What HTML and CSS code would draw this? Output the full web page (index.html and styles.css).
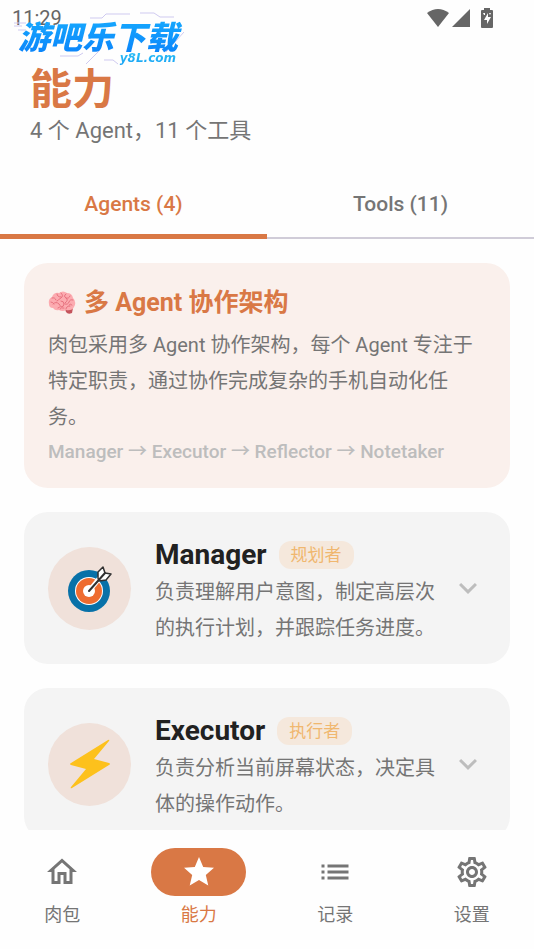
FILE: index.html
```
<!DOCTYPE html>
<html lang="zh-CN">
<head>
  <meta charset="UTF-8">
  <meta name="viewport" content="width=device-width, initial-scale=1">
  <title>能力</title>
  <link rel="stylesheet" href="styles.css">
</head>
<body>

  <div class="status-bar">
    <span>11:29</span>
    <div class="status-icons">
      <svg width="22" height="18" viewBox="0 0 22 18"><path d="M0 4Q11-4 22 4L11 18z"/></svg>
      <svg width="18" height="18" viewBox="0 0 18 18"><path d="M18 0V18H0z"/></svg>
      <svg class="battery" width="12" height="20" viewBox="0 0 12 20">
        <path d="M3 2V0h6v2h2q1 0 1 1v16q0 1-1 1H1q-1 0-1-1V3q0-1 1-1z"/>
        <path d="M7 5l-4 7h3v4l4-7H7zM2 5h2v2H3zM8 5h2L9 7z" fill="#fff"/>
      </svg>
    </div>
  </div>

  <div class="watermark">
    <svg class="watermark-lines" width="170" height="54" viewBox="0 0 170 54" stroke="#cfcaf0">
      <path d="M0 11h12M0 14h8M76 6h12l4-4h24M126 1h14l6 4h14M4 18h8M46 44h18l5-3M72 52l14-14M90 48h9l5 4M152 40l18-20"/>
    </svg>
    <span class="watermark-name">游吧乐下载</span>
    <span class="watermark-site">y8L.com</span>
  </div>

  <header>
    <h1>能力</h1>
    <p>4 个 Agent，11 个工具</p>
  </header>

  <div class="tabs" role="tablist">
    <button class="tab active" role="tab" aria-selected="true">Agents (4)</button>
    <button class="tab" role="tab" aria-selected="false">Tools (11)</button>
  </div>

  <main>
    <section class="intro">
      <h2>
        <svg width="28" height="24" viewBox="0 0 28 24">
          <path d="M17 18q5 0 8-1l-1 5q-4 2-6-1z" fill="#c4545c"/>
          <path d="M1 13Q0 8 4 6 6 1 11 2q4-3 8 0 5 0 6 5 4 4 1 9-2 4-8 3-3 2-7 0-4 1-6-2-4 0-4-4z" fill="#fcabb0"/>
          <path d="M4 7q3-1 4 2M9 3q0 3 4 3M5 13q3-3 6 0t-1 4M13 2q3 3 0 5t-4 3M18 3q-3 2 0 4t-1 5M22 5q-1 3-4 2M13 10q3 0 3 3t-3 3M25 9q-3-1-4 2t-4 2M18 18q0-3 4-3M24 14q-2-2-3 0M3 11q2 0 3 2M12 18q1-2 4-1" fill="none" stroke="#e7727f" stroke-linecap="round"/>
        </svg>
        多 Agent 协作架构
      </h2>
      <p>肉包采用多 Agent 协作架构，每个 Agent 专注于特定职责，通过协作完成复杂的手机自动化任务。</p>
      <p class="flow">Manager → Executor → Reflector → Notetaker</p>
    </section>

    <article class="agent">
      <div class="avatar">
        <svg width="44" height="48" viewBox="0 0 44 48">
          <circle cx="21" cy="27" r="21" fill="#0871a8"/>
          <circle cx="21" cy="27" r="14" fill="#fff"/>
          <circle cx="21" cy="27" r="13" fill="#ee6c30"/>
          <circle cx="21" cy="27" r="6" fill="#fff"/>
          <path d="M21 27L35 10" stroke="#fff" stroke-width="5"/>
          <path d="M30 14V8l5-5 2 6 6 1-5 6-7 1z" fill="#fff" stroke="#303030" stroke-width="1.5" stroke-linejoin="round"/>
          <path d="M21 27L37 9" stroke="#303030" stroke-width="2" stroke-linecap="round"/>
        </svg>
      </div>
      <div class="agent-text">
        <div class="agent-title">
          <h3>Manager</h3>
          <span class="badge">规划者</span>
        </div>
        <p>负责理解用户意图，制定高层次的执行计划，并跟踪任务进度。</p>
      </div>
      <button class="expand" aria-label="展开 Manager">
        <svg width="36" height="36" viewBox="0 0 24 24"><path d="M7.41 8.59L12 13.17l4.59-4.58L18 10l-6 6-6-6z"/></svg>
      </button>
    </article>

    <article class="agent">
      <div class="avatar">
        <svg width="42" height="50" viewBox="0 0 42 50">
          <path d="M39 1q2-1 1 1L25 20l15 4q2 1 0 2L3 49q-2 1-1-1l15-18-15-4q-2-1 0-2z" fill="#fdc11c"/>
        </svg>
      </div>
      <div class="agent-text">
        <div class="agent-title">
          <h3>Executor</h3>
          <span class="badge">执行者</span>
        </div>
        <p>负责分析当前屏幕状态，决定具体的操作动作。</p>
      </div>
      <button class="expand" aria-label="展开 Executor">
        <svg width="36" height="36" viewBox="0 0 24 24"><path d="M7.41 8.59L12 13.17l4.59-4.58L18 10l-6 6-6-6z"/></svg>
      </button>
    </article>
  </main>

  <nav>
    <a href="#home">
      <span class="nav-icon"><svg width="36" height="36" viewBox="0 0 24 24"><path d="M12 5.69l5 4.5V18h-2v-6H9v6H7v-7.81l5-4.5M12 3L2 12h3v8h6v-6h2v6h6v-8h3L12 3z"/></svg></span>
      肉包
    </a>
    <a href="#skills" class="active">
      <span class="nav-icon"><svg width="36" height="36" viewBox="0 0 24 24"><path d="M12 17.27L18.18 21l-1.64-7.03L22 9.24l-7.19-.61L12 2 9.19 8.63 2 9.24l5.46 4.73L5.82 21z"/></svg></span>
      能力
    </a>
    <a href="#history">
      <span class="nav-icon"><svg width="36" height="36" viewBox="0 0 24 24"><path d="M3 13h2v-2H3v2zm0 4h2v-2H3v2zm0-8h2V7H3v2zm4 4h14v-2H7v2zm0 4h14v-2H7v2zM7 7v2h14V7H7z"/></svg></span>
      记录
    </a>
    <a href="#settings">
      <span class="nav-icon"><svg width="36" height="36" viewBox="0 0 24 24"><path d="M19.43 12.98c.04-.32.07-.64.07-.98 0-.34-.03-.66-.07-.98l2.11-1.65c.19-.15.24-.42.12-.64l-2-3.46c-.09-.16-.26-.25-.44-.25-.06 0-.12.01-.17.03l-2.49 1c-.52-.4-1.08-.73-1.69-.98l-.38-2.65C14.46 2.18 14.25 2 14 2h-4c-.25 0-.46.18-.49.42l-.38 2.65c-.61.25-1.17.59-1.69.98l-2.49-1c-.06-.02-.12-.03-.18-.03-.17 0-.34.09-.43.25l-2 3.46c-.13.22-.07.49.12.64l2.11 1.65c-.04.32-.07.65-.07.98 0 .33.03.66.07.98l-2.11 1.65c-.19.15-.24.42-.12.64l2 3.46c.09.16.26.25.44.25.06 0 .12-.01.17-.03l2.49-1c.52.4 1.08.73 1.69.98l.38 2.65c.03.24.24.42.49.42h4c.25 0 .46-.18.49-.42l.38-2.65c.61-.25 1.17-.59 1.69-.98l2.49 1c.06.02.12.03.18.03.17 0 .34-.09.43-.25l2-3.46c.12-.22.07-.49-.12-.64l-2.11-1.65zm-1.98-1.71c.04.31.05.52.05.73 0 .21-.02.43-.05.73l-.14 1.13.89.7 1.08.84-.7 1.21-1.27-.51-1.04-.42-.9.68c-.43.32-.84.56-1.25.73l-1.06.43-.16 1.13-.2 1.35h-1.4l-.19-1.35-.16-1.13-1.06-.43c-.43-.18-.83-.41-1.23-.71l-.91-.7-1.06.43-1.27.51-.7-1.21 1.08-.84.89-.7-.14-1.13c-.03-.31-.05-.54-.05-.74s.02-.43.05-.73l.14-1.13-.89-.7-1.08-.84.7-1.21 1.27.51 1.04.42.9-.68c.43-.32.84-.56 1.25-.73l1.06-.43.16-1.13.2-1.35h1.39l.19 1.35.16 1.13 1.06.43c.43.18.83.41 1.23.71l.91.7 1.06-.43 1.27-.51.7 1.21-1.07.85-.89.7.14 1.13zM12 8c-2.21 0-4 1.79-4 4s1.79 4 4 4 4-1.79 4-4-1.79-4-4-4zm0 6c-1.1 0-2-.9-2-2s.9-2 2-2 2 .9 2 2-.9 2-2 2z"/></svg></span>
      设置
    </a>
  </nav>

</body>
</html>
```
FILE: styles.css
```
* {
  box-sizing: border-box;
}

body {
  margin: 0;
  height: 100vh;
  display: flex;
  flex-direction: column;
  font-family: Roboto, "Noto Sans CJK SC", sans-serif;
  font-size: 20px;
  color: #757575;
  background: #fefefe;
}

h1, h2, h3, p {
  margin: 0;
}

button {
  border: 0;
  padding: 0;
  background: none;
  font: inherit;
  color: inherit;
}

svg {
  display: block;
  flex-shrink: 0;
  fill: currentColor;
}

.status-bar {
  display: flex;
  justify-content: space-between;
  align-items: center;
  height: 36px;
  padding: 0 41px 0 12px;
  color: #666;
}

.status-icons {
  display: flex;
  align-items: center;
  gap: 3px;
}

.battery {
  margin-left: 8px;
}

/* logo over the top left corner */
.watermark {
  position: absolute;
  top: 12px;
  left: 14px;
  width: 170px;
}

.watermark-lines {
  position: absolute;
  top: 0;
  left: 0;
  fill: none;
}

.watermark-name,
.watermark-site {
  position: relative;
  display: block;
  font-style: italic;
  font-weight: 900;
  color: transparent;
  background: linear-gradient(#18b0ff, #0a80fa);
  background-clip: text;
}

.watermark-name {
  padding: 6px 0 0 4px;
  font-size: 32px;
  line-height: 40px;
}

.watermark-site {
  margin-top: -8px;
  padding-right: 8px;
  font-family: "DejaVu Sans", sans-serif;
  font-size: 12px;
  line-height: 16px;
  text-align: right;
  background-image: linear-gradient(#2fc4f5, #18a0f5);
}

header {
  padding: 30px 30px 20px;
}

h1 {
  font-size: 42px;
  line-height: 48px;
  color: #d97845;
}

header p {
  font-size: 22px;
  line-height: 34px;
}

.tabs {
  display: flex;
}

.tab {
  flex: 1;
  height: 71px;
  font-size: 21px;
  font-weight: 500;
  box-shadow: inset 0 -2px #d0ccd8;
}

.tab.active {
  color: #d97845;
  box-shadow: inset 0 -5px #d97845;
}

main {
  flex: 1;
  min-height: 0;
  overflow: hidden;
  display: flex;
  flex-direction: column;
  gap: 24px;
  padding: 24px 24px 0;
}

.intro,
.agent {
  flex-shrink: 0;
  border-radius: 24px;
}

.intro {
  padding: 24px;
  background: #faf0ec;
}

h2 {
  display: flex;
  align-items: center;
  gap: 8px;
  font-size: 25px;
  line-height: 32px;
  color: #d97845;
}

.intro p,
.agent p {
  line-height: 36px;
}

.intro p {
  margin-top: 8px;
}

.intro .flow {
  margin-top: 5px;
  font-size: 19px;
  line-height: 24px;
  font-weight: 500;
  color: #bdbdbd;
}

.agent {
  display: flex;
  align-items: center;
  padding: 18px 24px;
  background: #f4f4f4;
}

.avatar {
  flex-shrink: 0;
  display: flex;
  align-items: center;
  justify-content: center;
  width: 83px;
  height: 83px;
  margin-right: 24px;
  border-radius: 50%;
  background: #f0e1da;
}

.agent-text {
  flex: 1;
}

.agent-title {
  display: flex;
  align-items: center;
  gap: 12px;
  padding-top: 6px;
}

h3 {
  font-size: 28px;
  line-height: 38px;
  color: #212121;
}

.badge {
  padding: 0 12px;
  border-radius: 12px;
  font-size: 17px;
  line-height: 28px;
  color: #f0b76f;
  background: #f5e8dc;
}

.expand {
  color: #bdbdbd;
}

nav {
  display: flex;
  gap: 12px;
  padding: 18px 0 20px;
}

nav a {
  flex: 1;
  display: flex;
  flex-direction: column;
  align-items: center;
  gap: 5px;
  font-size: 18px;
  line-height: 28px;
  text-decoration: none;
  color: #757575;
}

.nav-icon {
  display: flex;
  align-items: center;
  justify-content: center;
  width: 95px;
  height: 48px;
  border-radius: 24px;
}

nav .active {
  color: #d97845;
}

.active .nav-icon {
  color: #fff;
  background: #d97845;
}
```
